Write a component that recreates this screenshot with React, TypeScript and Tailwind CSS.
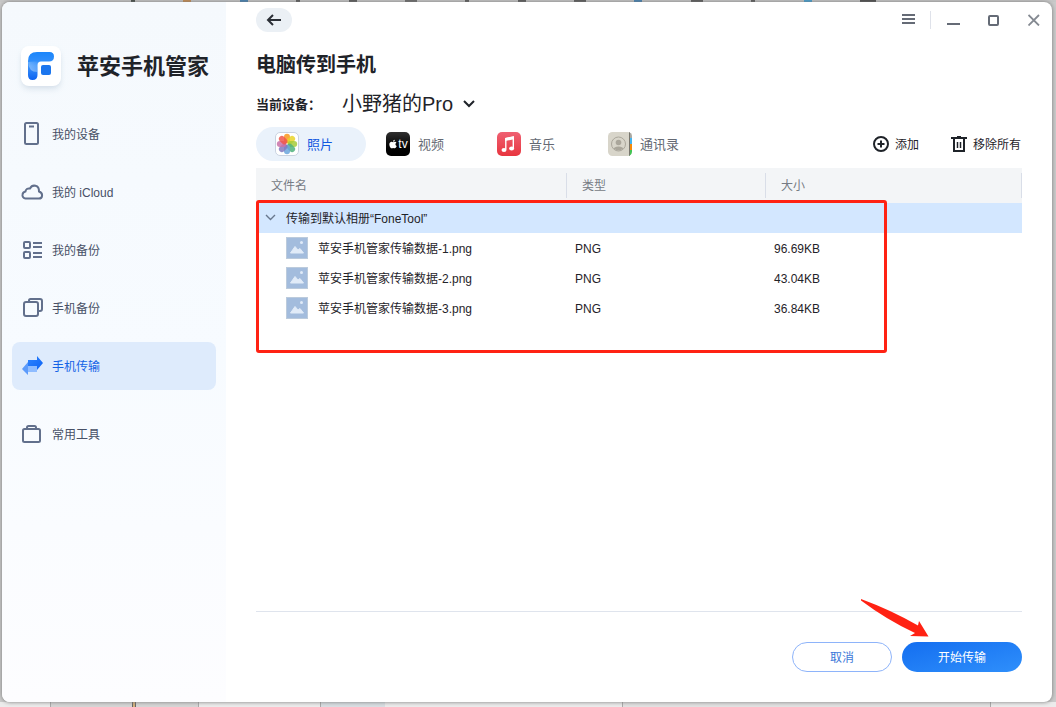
import type { ReactNode } from "react";
import { FaApple } from "react-icons/fa";

const iconProps = {
  width: 24,
  height: 24,
  viewBox: "0 0 24 24",
  fill: "none",
  stroke: "currentColor",
  strokeWidth: 2,
  "aria-hidden": true,
};

const PhoneIcon = () => (
  <svg {...iconProps}>
    <rect x="5" y="1" width="13" height="21" rx="1.5" />
    <path d="M9 4.5h5" />
  </svg>
);

const CloudIcon = () => (
  <svg {...iconProps}>
    <path
      d="M5.500 18.500A3.300 3.300 0 0 1 2.500 14.500C2.800 12.800 3.800 11.800 5.500 11.500C5.600 9.300 7.600 8 10 8.500C12.300 4 19.300 4.800 19 11.500C23.500 13 22.800 18.500 18.800 18.500Z"
      strokeLinejoin="round"
    />
  </svg>
);

const ListIcon = () => (
  <svg {...iconProps}>
    <rect x="4" y="4" width="6" height="6" rx="1" />
    <rect x="4" y="14" width="6" height="6" rx="1" />
    <path d="M13 5h9M13 9h9M13 15h9M13 19h9" />
  </svg>
);

const CopyIcon = () => (
  <svg {...iconProps}>
    <rect x="4" y="6" width="14" height="14" rx="2" />
    <path d="M9 6V4.500Q9 3 10.500 3H20Q22 3 22 5V13Q22 15 20 15H18" />
  </svg>
);

const TransferIcon = () => (
  <svg {...iconProps} stroke="none">
    <defs>
      <linearGradient id="transferTop" x1="0" y1="0" x2="1" y2="1">
        <stop offset="0" stopColor="#2f85ff" />
        <stop offset="1" stopColor="#0d63f5" />
      </linearGradient>
    </defs>
    <path d="M8 6h9V2l6 7l-6 7v-4H8Z" fill="url(#transferTop)" />
    <path d="M8 8v4h9v6H8v3L2 15Z" fill="#5c9bfb" />
    <path d="M8 12h9v6H8Z" fill="#8fbcff" />
  </svg>
);

const ToolboxIcon = () => (
  <svg {...iconProps}>
    <rect x="3" y="7" width="17" height="13" rx="1.500" />
    <path d="M7 7V5.500Q7 4 8.500 4h6Q16 4 16 5.500V7" />
  </svg>
);

const Logo = () => (
  <svg width="28" height="28" viewBox="0 0 28 28" aria-hidden="true">
    <defs>
      <linearGradient id="logoBody" x1="0.300" y1="0" x2="0.300" y2="1">
        <stop offset="0" stopColor="#1b86fb" />
        <stop offset="0.500" stopColor="#3c93fb" />
        <stop offset="1" stopColor="#0d62f0" />
      </linearGradient>
      <linearGradient id="logoShade" x1="1" y1="0" x2="0" y2="1">
        <stop offset="0" stopColor="#a3cfff" stopOpacity="0" />
        <stop offset="1" stopColor="#a3cfff" stopOpacity="0.800" />
      </linearGradient>
    </defs>
    <path
      d="M10 0H22.500Q27 0 27 4.500Q27 9.500 22 9.500H14Q10.500 9.500 10.500 13V23Q10.500 28 5.500 28Q1 28 1 23V9Q1 0 10 0Z"
      fill="url(#logoBody)"
    />
    <path d="M1 10Q1.500 20 10.500 20V13Q10.500 10 13 9.600Q5 9 1 10Z" fill="url(#logoShade)" />
    <rect x="14" y="13" width="10" height="10" rx="2" fill="#1c76ee" />
  </svg>
);

const petals = [
  { color: "#f8971d", angle: 0 },
  { color: "#e9d32a", angle: 45 },
  { color: "#a4cb3b", angle: 90 },
  { color: "#4fb27d", angle: 135 },
  { color: "#6aa5dc", angle: 180 },
  { color: "#8279c0", angle: 225 },
  { color: "#c971a8", angle: 270 },
  { color: "#f0564a", angle: 315 },
];

const PhotosIcon = () => (
  <svg width="24" height="24" viewBox="0 0 24 24" aria-hidden="true">
    <rect x="0.500" y="0.500" width="23" height="23" rx="4.500" fill="#fff" stroke="#c9d2e0" />
    {petals.map(({ color, angle }) => (
      <rect
        key={angle}
        x="9"
        y="1.800"
        width="6"
        height="9.500"
        rx="3"
        fill={color}
        opacity="0.850"
        transform={`rotate(${angle} 12 12)`}
      />
    ))}
  </svg>
);

const TvIcon = () => (
  <span className="flex size-6 items-center justify-center rounded-[5px] bg-linear-to-b from-[#303030] to-black text-white">
    <FaApple size={10} />
    <span className="text-xs leading-3">tv</span>
  </span>
);

const MusicIcon = () => (
  <svg width="24" height="24" viewBox="0 0 24 24" aria-hidden="true">
    <defs>
      <linearGradient id="music" x1="0" y1="0" x2="0" y2="1">
        <stop offset="0" stopColor="#ef6072" />
        <stop offset="1" stopColor="#e8353f" />
      </linearGradient>
    </defs>
    <rect width="24" height="24" rx="5" fill="url(#music)" />
    <path d="M8.800 17.500V6.500L16.300 5V16" fill="none" stroke="#fff" strokeWidth="1.400" />
    <path d="M8.200 6L17 4.200V7.200L8.200 9Z" fill="#fff" />
    <ellipse cx="7" cy="18" rx="2.500" ry="2" fill="#fff" />
    <ellipse cx="14.600" cy="16.500" rx="2.500" ry="2" fill="#fff" />
  </svg>
);

const ContactsIcon = () => (
  <svg width="24" height="24" viewBox="0 0 24 24" aria-hidden="true">
    <defs>
      <clipPath id="contactsClip">
        <rect width="24" height="24" rx="4.500" />
      </clipPath>
      <clipPath id="contactsHead">
        <circle cx="10.500" cy="12" r="6.500" />
      </clipPath>
    </defs>
    <g clipPath="url(#contactsClip)">
      <path d="M0 0h24v24H0Z" fill="#d8d5ca" />
      <path d="M21 0h3v6h-3Z" fill="#aaa9a3" />
      <path d="M21 6h3v6h-3Z" fill="#45b5f0" />
      <path d="M21 12h3v6h-3Z" fill="#f58a0a" />
      <path d="M21 18h3v6h-3Z" fill="#43c553" />
      <path d="M21.500 0v24" stroke="#77756d" />
      <circle cx="10.500" cy="12" r="7" fill="none" stroke="#aaa69b" />
      <g clipPath="url(#contactsHead)" fill="#aaa69b">
        <circle cx="10.500" cy="10.500" r="2.800" />
        <ellipse cx="10.500" cy="18" rx="5.500" ry="3.500" />
      </g>
    </g>
  </svg>
);

const PictureIcon = () => (
  <svg width="22" height="22" viewBox="0 0 22 22" className="shrink-0" aria-hidden="true">
    <rect x="0.500" y="0.500" width="21" height="21" fill="#a3bcdd" stroke="#bccbdc" />
    <path d="M4.500 16L9 9.500L12 13L14 11.500L17.500 16Z" fill="#e1ebf8" stroke="#e1ebf8" strokeLinejoin="round" />
    <circle cx="15.500" cy="5.500" r="1.500" fill="#dfeaf8" />
  </svg>
);

type NavItem = { label: string; icon: ReactNode; active?: boolean };

const navItems: NavItem[] = [
  { label: "我的设备", icon: <PhoneIcon /> },
  { label: "我的 iCloud", icon: <CloudIcon /> },
  { label: "我的备份", icon: <ListIcon /> },
  { label: "手机备份", icon: <CopyIcon /> },
  { label: "手机传输", icon: <TransferIcon />, active: true },
];

const NavLink = ({ label, icon, active }: NavItem) => (
  <a
    href="#"
    aria-current={active ? "page" : undefined}
    className={`flex h-12 items-center gap-2 rounded-lg px-2 text-xs ${
      active ? "bg-[#deebfc] text-[#1463e6]" : "text-[#475066]"
    }`}
  >
    <span className={active ? "" : "text-[#62708c]"}>{icon}</span>
    <span className="pt-[2px]">{label}</span>
  </a>
);

const Sidebar = () => (
  <aside className="w-56 shrink-0 bg-linear-to-b from-[#f5f9fd] via-[#f7fbff] to-[#fdfdff] px-[10px] pt-11">
    <div className="flex items-center gap-4 pl-[9px]">
      <div className="flex size-10 shrink-0 items-center justify-center rounded-lg bg-white shadow-md shadow-slate-300/60">
        <Logo />
      </div>
      <h1 className="pt-[2px] text-[22px] leading-[38px] font-bold whitespace-nowrap text-[#1f2329]">苹安手机管家</h1>
    </div>
    <nav className="mt-6 flex flex-col gap-[10px]">
      {navItems.map((item) => (
        <NavLink key={item.label} {...item} />
      ))}
      <div className="mt-[10px]">
        <NavLink label="常用工具" icon={<ToolboxIcon />} />
      </div>
    </nav>
  </aside>
);

const TitleBar = () => (
  <header className="flex h-9 items-center justify-between pr-3 pl-[30px] text-[#656b76]">
    <button aria-label="返回" className="flex h-6 w-9 items-center justify-center rounded-full bg-[#ebf0f5] text-[#2b2f36]">
      <svg width="16" height="12" viewBox="0 0 16 12" fill="none" stroke="currentColor" strokeWidth="2">
        <path d="M7 1L2 6l5 5M2 6h13" />
      </svg>
    </button>
    <div className="flex items-center">
      <button aria-label="菜单">
        <svg width="13" height="12" viewBox="0 0 13 12" fill="none" stroke="currentColor" strokeWidth="2">
          <path d="M0 1h13M0 5h13M0 9h13" />
        </svg>
      </button>
      <span className="mr-4 ml-[15px] h-[18px] w-px bg-[#dfe2ea]" />
      <button aria-label="最小化">
        <svg width="13" height="12" viewBox="0 0 13 12" fill="none" stroke="currentColor" strokeWidth="2">
          <path d="M0 10h13" />
        </svg>
      </button>
      <button aria-label="最大化" className="ml-7">
        <svg width="12" height="12" viewBox="0 0 12 12" fill="none" stroke="currentColor" strokeWidth="2">
          <rect x="1" y="2" width="9" height="9" rx="1" />
        </svg>
      </button>
      <button aria-label="关闭" className="ml-7">
        <svg width="12" height="12" viewBox="0 0 12 12" fill="none" stroke="#858a92" strokeWidth="1.800">
          <path d="M0.500 1l10.500 10.500M11 1L0.500 11.500" />
        </svg>
      </button>
    </div>
  </header>
);

const tabs = [
  { label: "照片", icon: <PhotosIcon /> },
  { label: "视频", icon: <TvIcon /> },
  { label: "音乐", icon: <MusicIcon /> },
  { label: "通讯录", icon: <ContactsIcon /> },
];

const Toolbar = () => (
  <div className="mt-[10px] flex items-center justify-between">
    <div role="tablist" className="flex gap-px">
      {tabs.map((tab, i) => (
        <button
          key={tab.label}
          role="tab"
          aria-selected={i === 0}
          className={`flex h-[34px] w-[110px] items-center gap-2 rounded-full pl-[19px] text-[13px] whitespace-nowrap ${
            i === 0 ? "bg-[#eaf2fb] text-[#1258e0]" : "text-[#646973]"
          }`}
        >
          {tab.icon}
          <span className="pt-[2px]">{tab.label}</span>
        </button>
      ))}
    </div>
    <div className="flex gap-8 pr-px text-xs text-[#1f2329]">
      <button className="flex items-center gap-[6px]">
        <svg width="16" height="16" viewBox="0 0 16 16" fill="none" stroke="currentColor" strokeWidth="2">
          <circle cx="8" cy="8" r="7" />
          <path d="M8 4.500v7M4.500 8h7" />
        </svg>
        <span className="pt-[2px]">添加</span>
      </button>
      <button className="flex items-center gap-[6px]">
        <svg width="16" height="16" viewBox="0 0 16 16" fill="none" stroke="currentColor" strokeWidth="2">
          <path d="M0 2h16M6 1h4M3 2v13h10V2" />
          <path d="M6.500 6v6M9.500 6v6" strokeWidth="1.500" />
        </svg>
        <span className="pt-[2px]">移除所有</span>
      </button>
    </div>
  </div>
);

const files = [
  { name: "苹安手机管家传输数据-1.png", type: "PNG", size: "96.69KB" },
  { name: "苹安手机管家传输数据-2.png", type: "PNG", size: "43.04KB" },
  { name: "苹安手机管家传输数据-3.png", type: "PNG", size: "36.84KB" },
];

const columns = [
  { label: "文件名", width: "w-[311px]" },
  { label: "类型", width: "w-[199px]" },
  { label: "大小", width: "" },
];

const FileTable = () => (
  <div className="relative mt-[7px]">
    <table className="w-full table-fixed text-left text-xs text-[#1f2329]">
      <thead>
        <tr className="h-[35px] bg-[#f3f5f7]">
          {columns.map((col) => (
            <th key={col.label} className={`p-0 font-normal text-[#767b84] ${col.width}`}>
              <div className="h-[25px] border-r border-[#d9dee8] pt-[2px] pl-[15px] leading-[23px]">{col.label}</div>
            </th>
          ))}
        </tr>
      </thead>
      <tbody>
        <tr className="h-[30px] bg-[#d3e7ff]">
          <td colSpan={3} className="p-0 pl-[9px]">
            <button className="flex items-center gap-[10px]">
              <svg width="11" height="8" viewBox="0 0 11 8" fill="none" stroke="#68778e" strokeWidth="1.400">
                <path d="M1 1l4.500 4.500L10 1" />
              </svg>
              <span className="pt-[2px]">传输到默认相册“FoneTool”</span>
            </button>
          </td>
        </tr>
        {files.map((file) => (
          <tr key={file.name} className="h-[30px]">
            <td className="p-0 pl-[30px]">
              <div className="flex items-center gap-[10px]">
                <PictureIcon />
                <span className="pt-[2px]">{file.name}</span>
              </div>
            </td>
            <td className="p-0 pt-[2px] pl-2">{file.type}</td>
            <td className="p-0 pt-[2px] pl-2">{file.size}</td>
          </tr>
        ))}
      </tbody>
    </table>
    {/* Highlight around the file group */}
    <div className="pointer-events-none absolute top-8 right-[135px] left-0 h-[153px] rounded-[3px] border-3 border-[#ff2213]" />
  </div>
);

const ActionBar = () => (
  <footer className="relative mt-auto flex justify-end gap-[10px] border-t border-[#dfe4ed] pt-[30px] pb-[30px] text-xs">
    <button className="h-[30px] w-[100px] rounded-full border border-[#8eb4fa] pt-[2px] text-[#3b78d8]">取消</button>
    <button className="h-[30px] w-[120px] rounded-full bg-linear-to-br from-[#146ef0] to-[#2f8ffb] pt-[2px] text-white">
      开始传输
    </button>
    {/* Arrow pointing at the start button */}
    <svg
      width="70"
      height="40"
      viewBox="0 0 70 40"
      className="pointer-events-none absolute -top-[13px] right-[92px]"
      aria-hidden="true"
    >
      <path d="M1 0Q31 11 58 26.500L59 22L68.500 37.500L50 37L55 34Q27 21 1 1.500Z" fill="#ff2213" />
    </svg>
  </footer>
);

// Slivers of the toolbar behind the window
const TopEdge = () => (
  <div className="flex h-[2px] justify-between bg-[#c8c8c8] pr-[180px] pl-[131px]">
    <span className="w-1 bg-[#3c4441]" />
    <span className="w-2 bg-[#c98a4b]" />
    <span className="w-2 bg-[#3d7fb4]" />
    <span className="w-1 bg-[#555]" />
    <span className="w-2 bg-[#555]" />
    <span className="w-3 bg-[#666]" />
    <span className="w-1 bg-[#555]" />
    <span className="w-2 bg-[#555]" />
    <span className="w-3 bg-[#555]" />
    <span className="w-2 bg-[#3d7fb4]" />
    <span className="w-3 bg-[#555]" />
    <span className="w-1 bg-[#555]" />
    <span className="w-2 bg-[#3d9fd4]" />
    <span className="w-4 bg-[#444]" />
  </div>
);

const BottomEdge = () => (
  <div className="flex h-[5px] bg-[#ececec]">
    <span className="w-[50px]" />
    <span className="w-[82px] border-l border-[#aaa] bg-[#d6d6d6]" />
    <span className="w-1 border-x border-[#666] bg-[#d6b27c]" />
    <span className="w-[63px] border-r border-[#aaa] bg-[#d6d6d6]" />
    <span className="w-[121px]" />
    <span className="w-[65px] border-l border-[#aaa] bg-[#d9dfe3]" />
    <span className="w-[237px]" />
    <span className="flex-1 border-x border-[#aaa] bg-[#e2e2e2]" />
    <span className="w-[65px]" />
  </div>
);

export default function App() {
  return (
    <div className="flex min-h-screen flex-col bg-[#cbcbcb] font-['Liberation_Sans','Noto_Sans_CJK_SC',sans-serif]">
      <TopEdge />
      <div className="z-10 mr-1 ml-[2px] flex flex-1 overflow-hidden rounded-lg bg-white shadow-[0_0_4px_#777]">
        <Sidebar />
        <main className="flex min-w-0 flex-1 flex-col">
          <TitleBar />
          <div className="flex flex-1 flex-col px-[30px]">
            <h2 className="mt-3 text-xl leading-[30px] font-bold text-[#1f2329]">电脑传到手机</h2>
            <div className="mt-[10px] flex h-[27px] items-center text-[#1f2329]">
              <span className="w-[86px] pt-[2px] text-[13px] font-bold">当前设备：</span>
              <button className="flex items-center gap-[10px] text-xl leading-[27px]">
                <span className="pt-[2px]">小野猪的Pro</span>
                <svg width="12" height="8" viewBox="0 0 12 8" fill="none" stroke="currentColor" strokeWidth="2">
                  <path d="M1 1l5 5l5-5" />
                </svg>
              </button>
            </div>
            <Toolbar />
            <FileTable />
            <ActionBar />
          </div>
        </main>
      </div>
      <BottomEdge />
    </div>
  );
}
